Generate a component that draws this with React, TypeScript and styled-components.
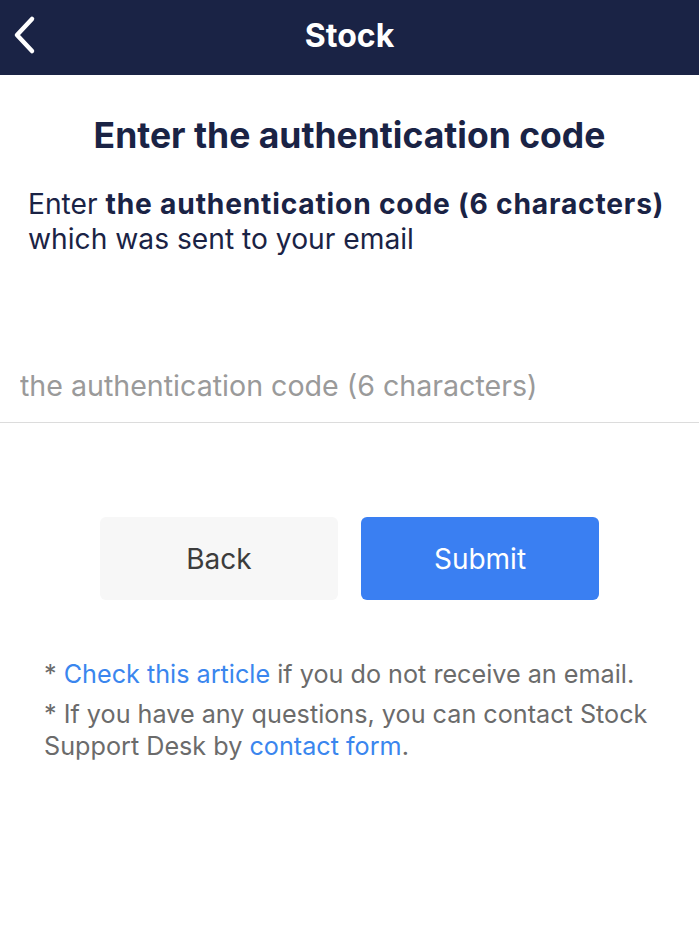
import styled, { createGlobalStyle } from 'styled-components';

const GlobalStyle = createGlobalStyle`
  html, body {
    margin: 0;
    padding: 0;
    background: #ffffff;
    font-family: Inter, Roboto, "Liberation Sans", Arial, sans-serif;
  }
`;

function BackIcon() {
  return (
    <svg width="28" height="40" viewBox="0 0 28 40" fill="none">
      <path d="M22 4 L7 20 L22 36" stroke="#ffffff" strokeWidth="4.5" strokeLinecap="round" strokeLinejoin="round" />
    </svg>
  );
}

export default function App() {
  return (
    <>
      <GlobalStyle />
      <Page>
        <Header>
          <HeaderBack>
            <BackIcon />
          </HeaderBack>
          <HeaderTitle>Stock</HeaderTitle>
        </Header>
        <Title>Enter the authentication code</Title>
        <Lead>
          Enter <strong>the authentication code (6 characters)</strong>
          <br />
          which was sent to your email
        </Lead>
        <Field placeholder="the authentication code (6 characters)" />
        <Actions>
          <Button>Back</Button>
          <Button primary>Submit</Button>
        </Actions>
        <Notes>
          <Note>
            * <Link>Check this article</Link> if you do not receive an email.
          </Note>
          <Note>
            * If you have any questions, you can contact Stock Support Desk by <Link>contact form</Link>.
          </Note>
        </Notes>
      </Page>
    </>
  );
}

const Page = styled.div`
  width: 100%;
  min-height: 936px;
  background: #ffffff;
`;

const Header = styled.div`
  position: relative;
  height: 75px;
  background: #1a2345;
  display: flex;
  align-items: center;
  justify-content: center;
`;

const HeaderBack = styled.div`
  position: absolute;
  left: 10px;
  top: 15px;
  display: flex;
`;

const HeaderTitle = styled.div`
  color: #ffffff;
  font-size: 32px;
  font-weight: 700;
  margin-top: -4px;
`;

const Title = styled.h1`
  margin: 38px 0 0;
  text-align: center;
  color: #1a2345;
  font-size: 35.5px;
  font-weight: 700;
  line-height: 46px;
`;

const Lead = styled.p`
  margin: 28px 0 0;
  padding: 0 28px;
  color: #1a2345;
  font-size: 28.2px;
  line-height: 35px;
  white-space: nowrap;

  strong {
    font-weight: 700;
    letter-spacing: 0.8px;
  }
`;

const Field = styled.input`
  display: block;
  box-sizing: border-box;
  width: 100%;
  margin: 110px 0 0;
  padding: 0 20px 17px;
  border: none;
  border-bottom: 1.5px solid #dcdcdc;
  outline: none;
  font-family: inherit;
  font-size: 28.6px;
  line-height: 38px;
  color: #333;
  background: transparent;

  &::placeholder {
    color: #9a9a9a;
  }
`;

const Actions = styled.div`
  display: flex;
  justify-content: center;
  gap: 23px;
  margin-top: 94px;
`;

const Button = styled.button<{ primary?: boolean }>`
  width: 238px;
  height: 83px;
  border: none;
  border-radius: 6px;
  font-family: inherit;
  font-size: 28px;
  background: ${({ primary }) => (primary ? '#3a7ff2' : '#f7f7f7')};
  color: ${({ primary }) => (primary ? '#ffffff' : '#3c3c3c')};
`;

const Notes = styled.div`
  margin-top: 58px;
  padding: 0 44px;
  display: flex;
  flex-direction: column;
  gap: 8px;
`;

const Note = styled.p`
  margin: 0;
  color: #6b6b6b;
  font-size: 25.2px;
  line-height: 32px;
`;

const Link = styled.span`
  color: #3a86ee;
`;
